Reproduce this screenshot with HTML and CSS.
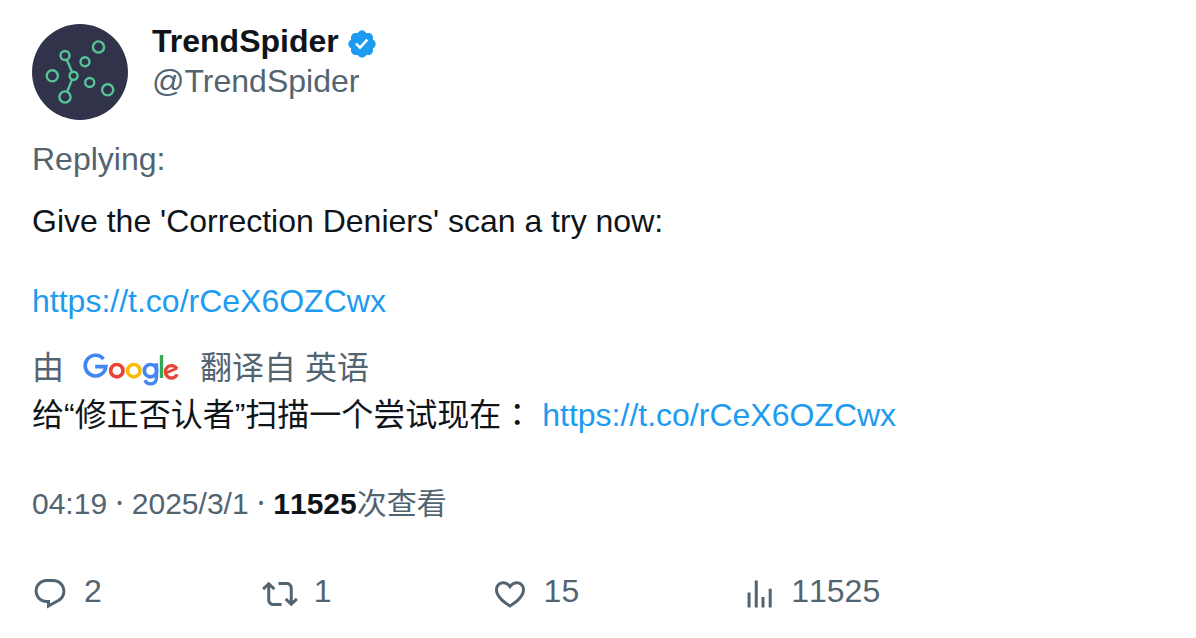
FILE: index.html
```html
<!DOCTYPE html>
<html lang="zh-CN">
<head>
<meta charset="utf-8">
<meta name="viewport" content="width=device-width, initial-scale=1">
<title>TrendSpider</title>
<link rel="stylesheet" href="styles.css">
</head>
<body>
<article class="post">
  <header class="author">
    <svg class="avatar" viewBox="0 0 96 96" role="img" aria-label="TrendSpider">
      <circle cx="48" cy="48" r="48" fill="#31334a"/>
      <g fill="none" stroke="#56c596" stroke-width="2.4">
        <circle cx="33" cy="31.5" r="4.5"/>
        <circle cx="66.5" cy="23" r="5.6"/>
        <circle cx="53" cy="37.8" r="4.5"/>
        <circle cx="20.3" cy="51.8" r="5.6"/>
        <circle cx="41.6" cy="51.8" r="4"/>
        <circle cx="57.7" cy="58.5" r="4.5"/>
        <circle cx="75.7" cy="65.8" r="5.6"/>
        <circle cx="33" cy="73" r="5.6"/>
        <path d="M34.8 35.8 40 48M40 55.6 35.2 67.6"/>
      </g>
    </svg>
    <div class="names">
      <div class="name">TrendSpider
        <svg class="badge" viewBox="0 0 22 22" role="img" aria-label="Verified"><path fill="#1d9bf0" d="M20.396 11c-.018-.646-.215-1.275-.57-1.816-.354-.54-.852-.972-1.438-1.246.223-.607.27-1.264.14-1.897-.131-.634-.437-1.218-.882-1.687-.47-.445-1.053-.75-1.687-.882-.633-.13-1.29-.083-1.897.14-.273-.587-.704-1.086-1.245-1.44S11.647 1.62 11 1.604c-.646.017-1.273.213-1.813.568s-.969.854-1.24 1.44c-.608-.223-1.267-.272-1.902-.14-.635.13-1.22.436-1.69.882-.445.47-.749 1.055-.878 1.688-.13.633-.08 1.29.144 1.896-.587.274-1.087.705-1.443 1.245-.356.54-.555 1.17-.574 1.817.02.647.218 1.276.574 1.817.356.54.856.972 1.443 1.245-.224.606-.274 1.263-.144 1.896.13.634.433 1.218.877 1.688.47.443 1.054.747 1.687.878.633.132 1.29.084 1.897-.136.274.586.705 1.084 1.246 1.439.54.354 1.17.551 1.816.569.647-.016 1.276-.213 1.817-.567s.972-.854 1.245-1.44c.604.239 1.266.296 1.903.164.636-.132 1.22-.447 1.68-.907.46-.46.776-1.044.908-1.681s.075-1.299-.165-1.903c.586-.274 1.084-.705 1.439-1.246.354-.54.551-1.17.569-1.816zM9.662 14.85l-3.429-3.428 1.293-1.302 2.072 2.072 4.4-4.794 1.347 1.246z"/></svg>
      </div>
      <div class="handle">@TrendSpider</div>
    </div>
  </header>

  <p class="replying">Replying:</p>
  <p class="body">Give the 'Correction Deniers' scan a try now:</p>
  <p class="link-line"><a class="link" href="https://t.co/rCeX6OZCwx">https://t.co/rCeX6OZCwx</a></p>

  <div class="source">
    <span>由</span>
    <svg class="google" viewBox="24 24 291 102" role="img" aria-label="Google">
      <g fill="none" stroke-width="11">
        <path stroke="#4285f4" d="M84 42A31 31 0 1 0 91 65H59"/>
        <circle stroke="#ea4335" cx="124" cy="77" r="18.5"/>
        <circle stroke="#fbbc05" cx="175" cy="77" r="18.5"/>
        <circle stroke="#4285f4" cx="225" cy="77" r="18.5"/>
        <path stroke="#4285f4" stroke-width="10" d="M243 55V97C243 121 216 122 208 106"/>
        <path stroke="#34a853" stroke-width="10" d="M258 30V99"/>
        <path stroke="#ea4335" stroke-width="8" d="M271 84 305 70"/>
        <path stroke="#ea4335" stroke-width="10" d="M304 71A18.500 18.500 0 1 0 305 88"/>
      </g>
    </svg>
    <span>翻译自 英语</span>
  </div>
  <p class="translation">给“修正否认者”扫描一个尝试现在<span class="colon" lang="zh-TW">：</span> <a class="link" href="https://t.co/rCeX6OZCwx">https://t.co/rCeX6OZCwx</a></p>

  <p class="meta">04:19 <span class="dot">·</span> 2025/3/1 <span class="dot">·</span> <strong class="views">11525</strong>次查看</p>

  <footer class="actions">
    <button class="action" type="button" aria-label="Reply 2">
      <svg class="icon" viewBox="0 0 24 24"><path d="M1.751 10c0-4.42 3.584-8 8.005-8h4.366c4.49 0 8.129 3.64 8.129 8.13 0 2.96-1.607 5.68-4.196 7.11l-8.054 4.46v-3.69h-.067c-4.49.1-8.183-3.51-8.183-8.01zm8.005-6c-3.317 0-6.005 2.69-6.005 6 0 3.37 2.77 6.08 6.138 6.01l.351-.01h1.761v2.3l5.087-2.81c1.951-1.08 3.163-3.13 3.163-5.36 0-3.39-2.744-6.13-6.129-6.13H9.756z"/></svg>
      <span>2</span>
    </button>
    <button class="action" type="button" aria-label="Repost 1">
      <svg class="icon" viewBox="0 0 24 24"><path d="M4.5 3.88l4.432 4.14-1.364 1.46L5.5 7.55V16c0 1.1.896 2 2 2H13v2H7.5c-2.209 0-4-1.79-4-4V7.55L1.432 9.48.068 8.02 4.5 3.88zM16.5 6H11V4h5.5c2.209 0 4 1.79 4 4v8.45l2.068-1.93 1.364 1.46-4.432 4.14-4.432-4.14 1.364-1.46 2.068 1.93V8c0-1.1-.896-2-2-2z"/></svg>
      <span>1</span>
    </button>
    <button class="action" type="button" aria-label="Like 15">
      <svg class="icon" viewBox="0 0 24 24"><path d="M16.697 5.5c-1.222-.06-2.679.51-3.89 2.16l-.805 1.09-.806-1.09C9.984 6.01 8.526 5.44 7.304 5.5c-1.243.07-2.349.78-2.91 1.91-.552 1.12-.633 2.78.479 4.82 1.074 1.97 3.257 4.27 7.129 6.61 3.87-2.34 6.052-4.64 7.126-6.61 1.111-2.04 1.03-3.7.477-4.82-.561-1.13-1.666-1.84-2.908-1.91zm4.187 7.69c-1.351 2.48-4.001 5.12-8.379 7.67l-.503.3-.504-.3c-4.379-2.55-7.029-5.19-8.382-7.67-1.36-2.5-1.41-4.86-.514-6.67.887-1.79 2.647-2.91 4.601-3.01 1.651-.09 3.368.56 4.798 2.01 1.429-1.45 3.146-2.1 4.796-2.01 1.954.1 3.714 1.22 4.601 3.01.896 1.81.846 4.17-.514 6.67z"/></svg>
      <span>15</span>
    </button>
    <button class="action" type="button" aria-label="Views 11525">
      <svg class="icon" viewBox="0 0 24 24"><path d="M10.5 21V3h2v18h-2zM19.8 21V8.5h2V21h-2zM5.7 21V11h2v10h-2zM15 21v-7h2v7h-2z"/></svg>
      <span>11525</span>
    </button>
  </footer>
</article>
</body>
</html>
```
FILE: styles.css
```css
* {
  box-sizing: border-box;
}

body {
  margin: 0;
  background: #fff;
  color: #0f1419;
  font-family: "Liberation Sans", "Noto Sans CJK SC", sans-serif;
  font-size: 32px;
  line-height: 40px;
}

p {
  margin: 0;
}

.post {
  padding: 21px 32px 24px;
}

.author {
  display: flex;
  align-items: flex-start;
  gap: 24px;
}

.avatar {
  flex: none;
  width: 96px;
  height: 96px;
  margin-top: 3px;
}

.name {
  display: flex;
  align-items: center;
  gap: 7px;
  font-weight: 700;
}

.badge {
  width: 32px;
  height: 32px;
  margin-top: 6px;
}

.handle,
.replying,
.source,
.meta {
  color: #536471;
}

.replying {
  margin-top: 19px;
}

.body {
  margin-top: 22px;
}

.link-line {
  margin-top: 40px;
}

.link {
  color: #1d9bf0;
  text-decoration: none;
}

.source {
  display: flex;
  align-items: center;
  gap: 19px;
  margin-top: 24px;
  line-height: 46px;
}

.google {
  width: 98px;
  height: 34px;
  margin-top: 4px;
}

.translation {
  line-height: 48px;
}

.colon {
  font-family: "Noto Sans CJK TC", sans-serif;
  line-height: 1;
}

.meta {
  margin-top: 45px;
  font-size: 30px;
}

.dot {
  font-family: "Noto Sans", sans-serif;
  line-height: 1;
}

.views {
  color: #0f1419;
  font-kerning: none;
}

.actions {
  display: flex;
  flex-wrap: wrap;
  gap: 24px 160px;
  margin-top: 46px;
}

.action {
  display: flex;
  align-items: center;
  gap: 16px;
  padding: 0;
  border: 0;
  background: none;
  color: #536471;
  font: inherit;
  font-kerning: none;
  cursor: pointer;
}

.icon {
  width: 36px;
  height: 36px;
  margin-top: 6px;
  fill: currentColor;
}
```
